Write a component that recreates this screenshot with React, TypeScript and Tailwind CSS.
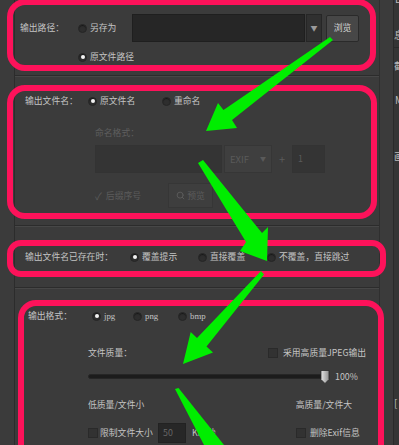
import { Search } from "lucide-react";

function Radio({ on }: { on?: boolean }) {
  return (
    <span className="flex h-[9px] w-[9px] shrink-0 items-center justify-center rounded-full border border-[#262626] bg-[#2e2e2e] shadow-[inset_0_1px_1px_rgba(0,0,0,0.5)]">
      {on && <span className="h-[4px] w-[4px] rounded-full bg-[#f2f2f2]" />}
    </span>
  );
}

function Check() {
  return <span className="h-[10px] w-[10px] shrink-0 border border-[#2a2a2a] bg-[#323232]" />;
}

function Sep() {
  return <div className="h-[2px] border-t border-b border-t-[#2c2c2c] border-b-[#474747]" />;
}

export default function App() {
  return (
    <div className="relative flex h-[445px] w-[399px] overflow-hidden bg-[#3b3b3b] font-['Noto_Sans_CJK_SC','Noto_Sans',sans-serif] text-[8.8px] leading-[12px] text-[#c4c4c4]">
      <div className="w-[15px] shrink-0 border-r border-[#2c2c2c]" />

      {/* main settings panel */}
      <div className="flex w-[365px] shrink-0 flex-col border-r border-[#2f2f2f]">
        {/* output path */}
        <div className="h-[75px] pl-[5px] pt-[14px]">
          <div className="flex h-[28px] items-center">
            <span className="w-[58px]">输出路径：</span>
            <span className="flex w-[54px] items-center gap-[3px]">
              <Radio />
              另存为
            </span>
            <div className="h-[28px] w-[173px] border border-[#1f1f1f] bg-[#262626]" />
            <div className="ml-px flex h-[28px] w-[16px] items-center justify-center border border-[#262626] bg-[#303030] text-[7px] text-[#9a9a9a]">
              ▼
            </div>
            <div className="ml-[4px] flex h-[27px] w-[33px] items-center justify-center rounded-[2px] border border-[#2a2a2a] bg-[#474747] text-[#d8d8d8]">
              浏览
            </div>
          </div>
          <div className="mt-[9px] flex h-[12px] items-center gap-[3px] pl-[58px]">
            <Radio on />
            原文件路径
          </div>
        </div>
        <Sep />

        {/* output file name */}
        <div className="h-[148px] pt-[18px]">
          <div className="flex h-[12px] items-center pl-[10px]">
            <span className="w-[63px]">输出文件名：</span>
            <span className="flex w-[74px] items-center gap-[3px]">
              <Radio on />
              原文件名
            </span>
            <span className="flex items-center gap-[3px]">
              <Radio />
              重命名
            </span>
          </div>
          <div className="mt-[20px] h-[12px] pl-[80px] text-[#5f5f5f]">命名格式：</div>
          <div className="mt-[6px] flex h-[28px] items-center pl-[80px] text-[#5a5a5a]">
            <div className="h-[28px] w-[127px] border border-[#333] bg-[#343434]" />
            <div className="ml-[2px] flex h-[28px] w-[48px] items-center justify-between border border-[#363636] bg-[#3f3f3f] px-[5px] text-[9.5px]">
              <span>EXIF</span>
              <span className="text-[6px]">▼</span>
            </div>
            <span className="w-[20px] text-center text-[11px]">+</span>
            <div className="flex h-[28px] w-[33px] items-center border border-[#333] bg-[#343434] pl-[5px]">1</div>
          </div>
          <div className="mt-[10px] flex h-[25px] items-center pl-[80px] text-[#5c5c5c]">
            <span className="flex w-[73px] items-center gap-[4px]">
              <span className="text-[10px]">✓</span>
              后缀序号
            </span>
            <div className="flex h-[25px] w-[45px] items-center justify-center gap-[2px] border border-[#363636] bg-[#3e3e3e]">
              <Search size={9} strokeWidth={2.5} />
              预览
            </div>
          </div>
        </div>
        <Sep />

        {/* when file exists */}
        <div className="h-[60px] pt-[24px]">
          <div className="flex h-[12px] items-center pl-[10px]">
            <span className="w-[105px]">输出文件名已存在时：</span>
            <span className="flex w-[68px] items-center gap-[3px]">
              <Radio on />
              覆盖提示
            </span>
            <span className="flex w-[69px] items-center gap-[3px]">
              <Radio />
              直接覆盖
            </span>
            <span className="flex items-center gap-[3px]">
              <Radio />
              不覆盖，直接跳过
            </span>
          </div>
        </div>
        <Sep />

        {/* output format */}
        <div className="pt-[21px]">
          <div className="flex h-[12px] items-center pl-[13px]">
            <span className="w-[64px]">输出格式：</span>
            <span className="flex w-[41px] items-center gap-[3px] font-['Liberation_Serif',serif]">
              <Radio on />
              jpg
            </span>
            <span className="flex w-[45px] items-center gap-[3px] font-['Liberation_Serif',serif]">
              <Radio />
              png
            </span>
            <span className="flex items-center gap-[3px] font-['Liberation_Serif',serif]">
              <Radio />
              bmp
            </span>
          </div>
          <div className="mt-[25px] flex h-[12px] items-center pl-[73px]">
            <span className="w-[180px]">文件质量：</span>
            <Check />
            <span className="ml-[5px]">采用高质量JPEG输出</span>
          </div>
          <div className="mt-[10px] flex h-[15px] items-center pl-[73px]">
            <div className="relative flex h-[15px] w-[242px] items-center">
              <div className="h-[5px] w-[237px] rounded-full border border-[#262626] bg-[#1c1c1c]" />
              <svg className="absolute right-0 top-0" width="10" height="15" viewBox="0 0 10 15">
                <defs>
                  <linearGradient id="th" x1="0" x2="1">
                    <stop offset="0" stopColor="#e6e6e6" />
                    <stop offset="1" stopColor="#8f8f8f" />
                  </linearGradient>
                </defs>
                <path d="M1 1.5h8v9l-4 4-4-4z" fill="url(#th)" stroke="#2a2a2a" strokeWidth="0.8" />
              </svg>
            </div>
            <span className="ml-[5px]">100%</span>
          </div>
          <div className="mt-[15px] flex h-[12px] w-[337px] justify-between pl-[73px]">
            <span>低质量/文件小</span>
            <span>高质量/文件大</span>
          </div>
          <div className="mt-[12px] flex h-[20px] items-center pl-[73px]">
            <Check />
            <span className="ml-[2px] w-[58px]">限制文件大小</span>
            <div className="flex h-[20px] w-[28px] items-center border border-[#222] bg-[#272727] pl-[4px] text-[#666]">50</div>
            <span className="ml-[6px] w-[104px]">KB/秒</span>
            <Check />
            <span className="ml-[4px]">删除Exif信息</span>
          </div>
        </div>
      </div>

      <div className="w-[13px] shrink-0" />

      {/* neighbouring column, mostly cut off */}
      <div className="flex flex-1 flex-col overflow-hidden border-l border-[#2a2a2a] bg-[#353535] text-[10px] leading-[12px] text-[#bdbdbd]">
        <span className="-mt-[7px] pl-px">L</span>
        <span className="mt-[24px]">息</span>
        <span className="mt-[6px] h-[1px] bg-[#2a2a2a]" />
        <span className="mt-[12px]">截</span>
        <span className="mt-[22px] pl-px">M</span>
        <span className="mt-[44px]">画</span>
        <span className="mt-[235px]">[</span>
      </div>

      {/* annotations */}
      <div className="absolute left-[7px] top-[-1px] h-[72px] w-[369px] rounded-[18px] border-[6px] border-[#fd125a]" />
      <div className="absolute left-[7px] top-[85px] h-[134px] w-[370px] rounded-[18px] border-[6px] border-[#fd125a]" />
      <div className="absolute left-[7px] top-[240px] h-[37px] w-[379px] rounded-[14px] border-[6px] border-[#fd125a]" />
      <div className="absolute left-[18px] top-[300px] h-[165px] w-[366px] rounded-[18px] border-[6px] border-[#fd125a]" />

      <svg className="pointer-events-none absolute left-0 top-0" width="399" height="445" viewBox="0 0 399 445">
        <g fill="#00ee00">
          <polygon points="206,131 218,103 223.5,110 330,37 333,40 232,120 237,128" />
          <polygon points="198,163 203,160 262,233 268,227 267,261 240,251 246,242" />
          <polygon points="183,364 190.7,332 197,338 261,271 264,274.5 206.5,346.5 213,352.5" />
          <polygon points="175,389 178.5,388 224,445 204,445" />
        </g>
      </svg>
    </div>
  );
}
